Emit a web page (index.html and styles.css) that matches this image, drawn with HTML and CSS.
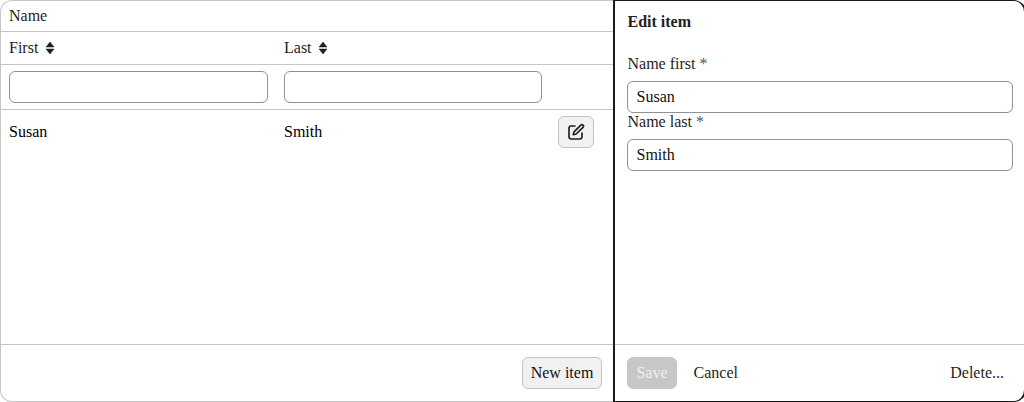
FILE: index.html
```html
<!DOCTYPE html>
<html lang="en">
<head>
<meta charset="utf-8">
<title>Items</title>
<link rel="stylesheet" href="styles.css">
</head>
<body>
<div class="crud">
  <section class="list">
    <div class="row group"><div class="cell">Name</div></div>
    <div class="row head">
      <div class="cell"><span class="name-first">First</span><svg class="sort" viewBox="0 0 8 12"><path d="M4 0 8 5H0ZM0 7H8L4 12Z"/></svg></div>
      <div class="cell"><span class="name-last">Last</span><svg class="sort" viewBox="0 0 8 12"><path d="M4 0 8 5H0ZM0 7H8L4 12Z"/></svg></div>
    </div>
    <div class="row filter">
      <div class="cell"><input class="field" type="text" aria-label="First"></div>
      <div class="cell"><input class="field" type="text" aria-label="Last"></div>
    </div>
    <div class="row item">
      <div class="cell">Susan</div>
      <div class="cell">Smith</div>
      <div class="cell"><button class="btn edit" aria-label="Edit"><svg class="pencil" viewBox="0 0 18 18"><path d="M8 3H4.2Q2 3 2 5.2V13.8Q2 16 4.2 16H12.8Q15 16 15 13.8V10"/><path d="M6.3 11.7 7 8.9 13.8 2.1a1.5 1.5 0 0 1 2.2 2.2L9.1 11Z"/></svg></button></div>
    </div>
    <footer class="footer end"><button class="btn new">New item</button></footer>
  </section>
  <section class="editor">
    <div class="form">
      <h1 class="title">Edit item</h1>
      <label class="label">Name first <span class="required">*</span></label>
      <input class="field" type="text" value="Susan">
      <label class="label">Name last <span class="required">*</span></label>
      <input class="field" type="text" value="Smith">
    </div>
    <footer class="footer">
      <button class="btn primary" disabled>Save</button>
      <button class="btn plain">Cancel</button>
      <button class="btn plain delete">Delete...</button>
    </footer>
  </section>
</div>
</body>
</html>
```
FILE: styles.css
```css
* { box-sizing: border-box; }
body { margin: 0; overflow: hidden; background: #fff; color: #1f1f22; font: 16px/20px "Liberation Serif", "Times New Roman", serif; }
.crud { display: grid; grid-template-columns: 613px 413px; width: 1026px; height: 402px; }
.list { display: flex; flex-direction: column; border: 1px solid #c6c6c6; border-right: 0; border-radius: 12px 0 0 12px; }
.row { display: grid; grid-template-columns: 275px 274px 52px; align-items: center; border-bottom: 1px solid #c6c6c6; }
.cell { padding: 0 8px; }
.group { height: 31px; }
.head { height: 33px; }
.head .cell { display: flex; align-items: center; }
.name-first { width: 37px; }
.name-last { width: 35px; }
.filter { height: 45px; }
.item { height: 44px; border-bottom: 0; color: #000; }
.sort { width: 8px; height: 12px; fill: #1f1f22; stroke: #1f1f22; stroke-width: .5; stroke-linejoin: round; overflow: visible; }
.field { display: block; width: 100%; height: 32px; padding: 0 9px; border: 1px solid #919191; border-radius: 6px; background: #fff; color: #111; font: inherit; outline: 0; }
.editor { display: flex; flex-direction: column; border: 1px solid #1b1b1e; border-left-width: 2px; border-right-width: 2px; border-radius: 0 12px 12px 0; }
.form { padding: 11px 11px 0 12px; }
.form .field { padding-left: 8.5px; }
.title { margin: 0 0 22px .5px; font-size: 16px; line-height: 20px; }
.label { display: block; height: 26px; padding-left: .5px; line-height: 18px; }
.title + .label { height: 27px; line-height: 20px; }
.required { color: #55555a; }
.footer { display: flex; align-items: center; height: 57px; margin-top: auto; padding: 0 11px 0 12px; border-top: 1px solid #c6c6c6; }
.end { justify-content: flex-end; }
.btn { height: 32px; padding: 0 8px; border: 1px solid #c2c2c2; border-radius: 6px; background: #f1f1f1; color: #111; font: inherit; }
.new { width: 80px; padding: 0; }
.edit { display: flex; align-items: center; justify-content: center; width: 36px; }
.pencil { flex: none; width: 18px; height: 18px; fill: none; stroke: #1f1f22; stroke-width: 1.65; stroke-linecap: round; stroke-linejoin: round; }
.primary { width: 50px; border-color: #c7c7c7; background: #c7c7c7; color: #f1f1f1; }
.plain { margin-left: 7.5px; border-color: transparent; background: transparent; color: #1f1f22; }
.delete { margin-left: auto; }
```
